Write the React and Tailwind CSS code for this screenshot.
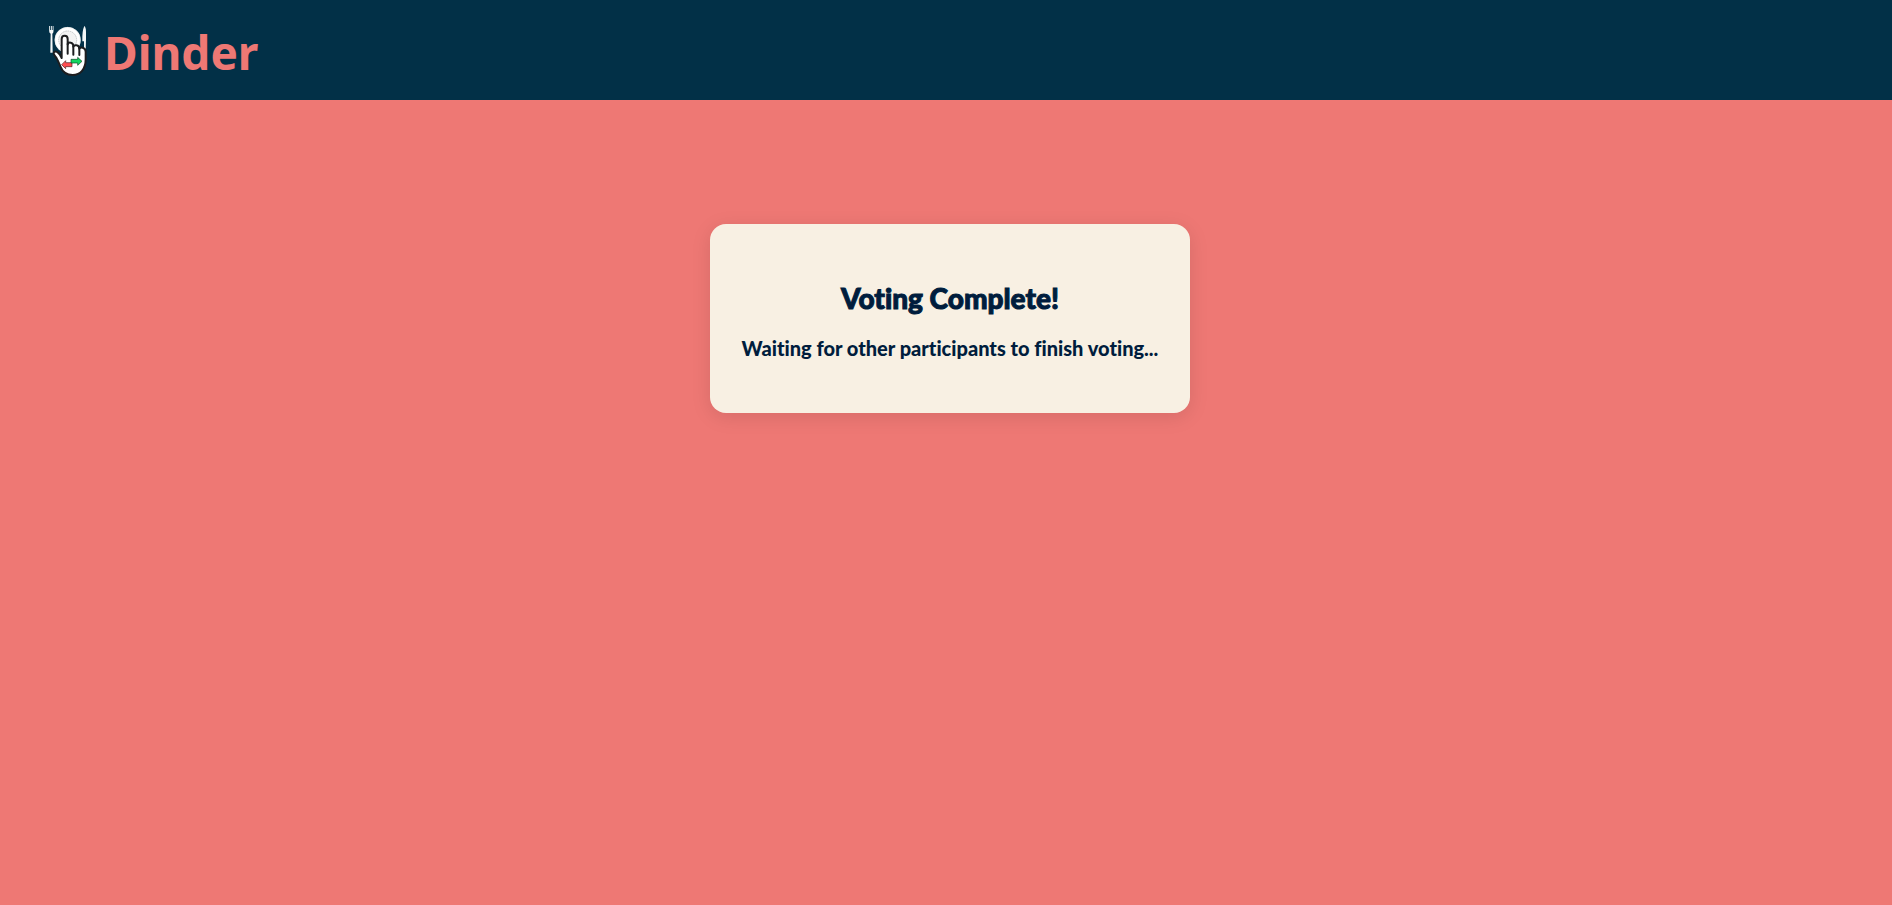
function Logo() {
  return (
    <svg className="h-17 w-14 shrink-0" viewBox="0 0 168 204" role="img" aria-label="Dinder logo">
      <g fill="#f4f7f8">
        <path d="M27.500 30h2.500v12h2.500V30h3v12h2.500V30h2.500v15q0 6-3.500 8l1 57h-7l1-57q-4.500-2-4.500-8z" />
        <path d="M133 30q5 4 5 18v22l-1 36h-5V76h-5q-1-32 6-46z" />
      </g>
      <circle cx="83" cy="72" r="39" fill="#ffffff" />
      <circle cx="83" cy="72" r="38" fill="none" stroke="#dfe3e5" strokeWidth="1.500" />
      <circle cx="83" cy="72" r="27" fill="#f3f3f3" stroke="#b9bdbf" strokeWidth="2.500" strokeDasharray="5 2" />
      <path
        d="M65 126V69q0-10 9-10t9 10v16q2-6 9-5 8 2 8 9v3q3-6 10-4 8 2 8 10 3-5 10-3 9 2 9 12v23c0 30-16 47-39 47-19 0-31-11-37-26-4-10-7-18-12-26-4-6-9-10-8-14 2-6 9-5 14 0 5 4 7 9 10 15z"
        fill="#ffffff"
        stroke="#1d1d1f"
        strokeWidth="6"
        strokeLinejoin="round"
      />
      <path d="M83 84v29M100 90v26M118 97v20" fill="none" stroke="#1d1d1f" strokeWidth="6" strokeLinecap="round" />
      <path d="M65 146 77 134v6h19v12H77v6z" fill="#ff4c50" stroke="#4b2022" strokeWidth="2" />
      <path d="M126 136 113 124v6H93v11h20v7z" fill="#12d65f" stroke="#0f4224" strokeWidth="2" />
    </svg>
  );
}

export default function App() {
  return (
    <div className="flex min-h-screen flex-col bg-[#ee7874]">
      <header className="flex items-center gap-2 bg-[#023047] px-10 py-4">
        <Logo />
        <h1 className="pt-1 font-['Noto_Sans','Open_Sans',sans-serif] text-[46px] leading-14 font-bold text-[#ee7874]">
          Dinder
        </h1>
      </header>
      <main className="flex flex-col items-center pt-31 pl-2">
        <section className="rounded-2xl bg-[#f8f0e3] px-8 pt-14 pb-[51px] text-center font-['Lato',sans-serif] text-[#001d3d] shadow-[0_4px_20px_rgba(0,0,0,0.1)] [font-variant-ligatures:none]">
          <h2 className="text-[28px] leading-9 font-black [-webkit-text-stroke:1px_#001d3d]">Voting Complete!</h2>
          <p className="mt-[18px] text-xl font-black">Waiting for other participants to finish voting...</p>
        </section>
      </main>
    </div>
  );
}
